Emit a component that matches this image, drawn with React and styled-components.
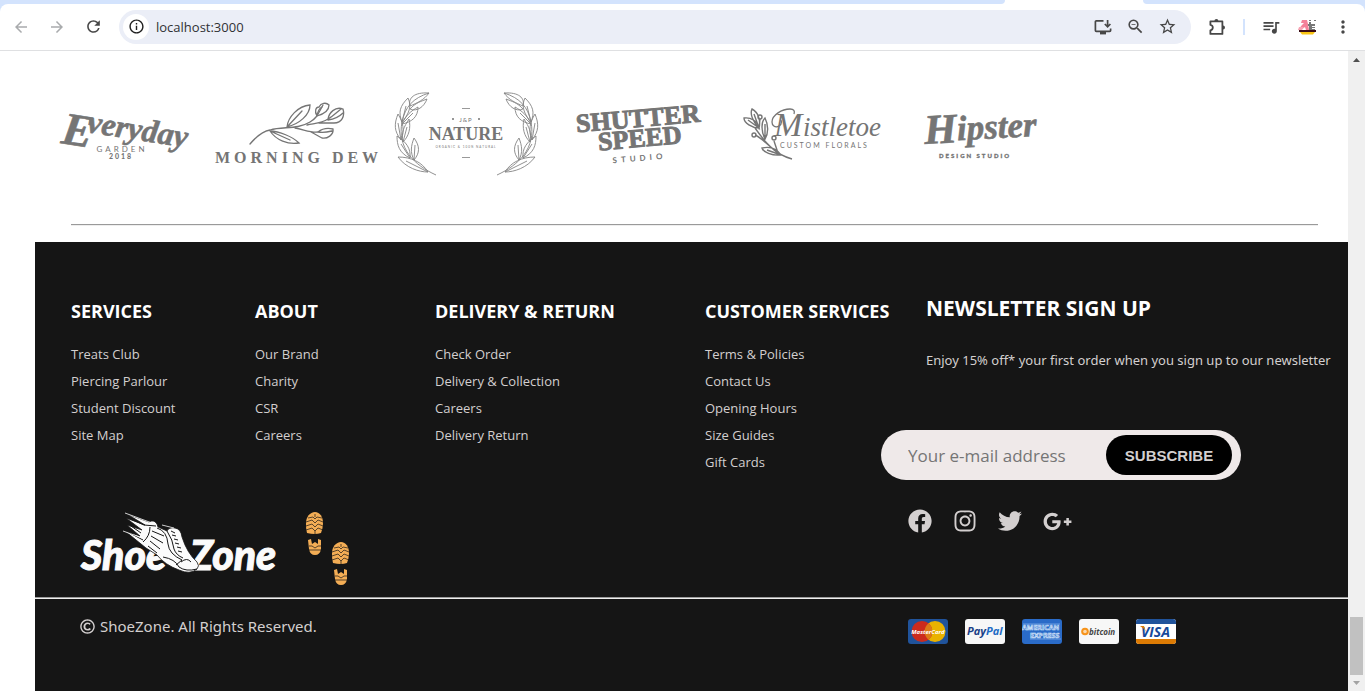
import React from 'react';
import styled, { createGlobalStyle } from 'styled-components';
import {
  MdArrowBack, MdArrowForward, MdRefresh, MdInfoOutline, MdZoomOut,
  MdStarBorder, MdQueueMusic, MdMoreVert,
} from 'react-icons/md';
import { FaFacebook, FaInstagram, FaTwitter, FaGooglePlusG, FaRegCopyright } from 'react-icons/fa';

const GlobalStyle = createGlobalStyle`
  * { box-sizing: border-box; }
  body { margin: 0; background: #fff; font-family: "Open Sans", "Noto Sans", sans-serif; }
  button, input { font: inherit; border: 0; margin: 0; padding: 0; background: none; }
  a { color: inherit; text-decoration: none; }
  svg { display: block; flex: none; }
`;

const Page = styled.div`
  height: 100vh;
  display: flex;
  flex-direction: column;
  overflow: hidden;
`;

/* ---------- browser chrome ---------- */

const TabStrip = styled.div`
  height: 4px;
  flex: none;
  display: flex;
  background: #fff;
`;
const TabsBefore = styled.div`
  flex: 1;
  border-bottom-right-radius: 4px;
  background: #d3e3fd;
`;
const ActiveTab = styled.div`
  width: 138px;
`;
const TabsAfter = styled.div`
  width: 222px;
  border-bottom-left-radius: 4px;
  background: #d3e3fd;
`;
const ToolbarBack = styled.div`
  flex: none;
  background: #d3e3fd;
`;
const Toolbar = styled.header`
  height: 47px;
  display: flex;
  align-items: center;
  padding: 0 10px 1px 10px;
  background: #fff;
  border-bottom: 1px solid #dfe0e2;
  border-radius: 8px 8px 0 0;
`;
const ToolButton = styled.button`
  width: ${(p) => p.$width || 36}px;
  height: 24px;
  display: flex;
  align-items: center;
  justify-content: center;
  flex: none;
  color: ${(p) => (p.$muted ? '#a9abad' : '#474747')};
`;
const NavButtons = styled.nav`
  display: flex;
  width: 110px;
  margin-left: -7px;
  margin-right: 6px;
`;
const AddressBar = styled.div`
  flex: 1;
  height: 34px;
  display: flex;
  align-items: center;
  padding: 0 8px 0 4px;
  border-radius: 17px;
  background: #ebeef7;
`;
const SiteInfo = styled.button`
  width: 26px;
  height: 26px;
  display: flex;
  align-items: center;
  justify-content: center;
  border-radius: 50%;
  background: #fff;
  color: #1f1f1f;
`;
const AddressInput = styled.input`
  flex: 1;
  min-width: 0;
  margin-left: 7px;
  font-size: 13px;
  color: #303134;
  outline: none;
`;
const Extensions = styled.div`
  display: flex;
  align-items: center;
  margin-left: 8px;
  margin-right: -6px;
`;
const ToolDivider = styled.span`
  width: 2px;
  height: 16px;
  margin: 0 8px;
  background: #d3e3fd;
`;

/* ---------- page viewport ---------- */

const Viewport = styled.div`
  flex: 1;
  min-height: 0;
  display: flex;
`;
const Content = styled.main`
  flex: 1;
  min-width: 0;
  padding-left: 35px;
  display: flex;
  flex-direction: column;
  overflow: hidden;
`;
const ScrollTrack = styled.aside`
  width: 17px;
  flex: none;
  display: flex;
  flex-direction: column;
  align-items: center;
  justify-content: space-between;
  padding: 7px 2px 6px;
  background: #f0f0f0;
`;
const ScrollEnd = styled.div`
  width: 13px;
  display: flex;
  flex-direction: column;
  align-items: center;
  gap: 6px;
`;
const ScrollThumb = styled.div`
  width: 13px;
  height: 58px;
  background: #c1c1c1;
`;

const Brands = styled.section`
  display: flex;
  padding: 29px 0 38px 5px;
`;
const Rule = styled.hr`
  width: auto;
  margin: 0 30px 16px 36px;
  border: 0;
  border-top: 1px solid #9a9a9a;
  border-bottom: 1px solid #eeeeee;
`;

/* ---------- footer ---------- */

const Footer = styled.footer`
  flex: 1;
  background: #151515;
  color: #d3cfcf;
`;
const FooterGrid = styled.div`
  display: grid;
  grid-template-columns: 184px 180px 270px 176px 1fr;
  grid-template-rows: auto auto;
  padding: 54px 0 9px 36px;
`;
const LinkColumn = styled.section`
  white-space: nowrap;
`;
const ColumnTitle = styled.h2`
  margin: 0;
  padding-top: 3px;
  font-size: 18px;
  line-height: 24px;
  font-weight: 700;
  color: #fff;
`;
const LinkList = styled.ul`
  list-style: none;
  margin: 18px 0 0;
  padding: 0;
  font-size: 13px;
  line-height: 27px;
`;
const Newsletter = styled.section`
  grid-row: 1 / span 2;
  grid-column: 5;
  white-space: nowrap;
`;
const NewsletterText = styled.div`
  padding-left: 45px;
`;
const NewsletterTitle = styled.h2`
  margin: 0;
  font-size: 21px;
  line-height: 24px;
  font-weight: 700;
  color: #fff;
`;
const NewsletterNote = styled.p`
  margin: 30px 0 0;
  font-family: "Noto Sans", "Open Sans", sans-serif;
  font-size: 13px;
  line-height: 20px;
`;
const SubscribeForm = styled.form`
  width: 360px;
  height: 50px;
  margin-top: 60px;
  display: flex;
  align-items: center;
  padding: 0 9px 0 27px;
  border-radius: 25px;
  background: #efe9e9;
`;
const EmailInput = styled.input`
  flex: 1;
  min-width: 0;
  font-size: 17px;
  outline: none;
  &::placeholder { color: #757575; opacity: 1; }
`;
const SubscribeButton = styled.button`
  width: 126px;
  height: 40px;
  border-radius: 20px;
  background: #000;
  color: #d3cfcf;
  font-family: "Liberation Sans", Arial, sans-serif;
  font-size: 15px;
  font-weight: 700;
`;
const SocialLinks = styled.div`
  display: flex;
  margin-top: 29px;
  padding-left: 27px;
  a { width: 45px; height: 24px; display: flex; align-items: center; }
`;
const LogoRow = styled.div`
  grid-column: 1 / span 4;
  display: flex;
  gap: 25px;
  padding: 32px 0 0 7px;
`;
const FooterRule = styled.hr`
  margin: 0;
  border: 0;
  border-top: 1px solid #9a9a9a;
  border-bottom: 1px solid #eeeeee;
`;
const Legal = styled.div`
  display: grid;
  grid-template-columns: 828px 1fr;
  padding: 16px 0 0 45px;
`;
const Copyright = styled.p`
  margin: 0;
  display: flex;
  align-items: center;
  gap: 5px;
  height: 22px;
  font-family: "Noto Sans", "Open Sans", sans-serif;
  font-size: 15px;
`;
const Cards = styled.div`
  display: flex;
  gap: 17px;
  padding-top: 4px;
`;

/* ---------- drawings ---------- */

const GREY = '#757575';
const SERIF = '"Liberation Serif", serif';
const SANS = 'Lato, sans-serif';

function InstallIcon() {
  return (
    <svg width="18" height="18" viewBox="0 0 18 18" fill="none" stroke="#474747" strokeWidth="1.7">
      <path d="M9.5 2.9H2.3a.9.9 0 0 0-.9.9v8.6c0 .5.4.9.9.9h13.4c.5 0 .9-.4.9-.9V10.5" />
      <path d="M13.6 2v6.4M10.8 6l2.8 2.8L16.4 6" />
      <path d="M6 15.2h6" strokeWidth="2.4" />
    </svg>
  );
}

function PuzzleIcon() {
  return (
    <svg width="18" height="18" viewBox="0 0 18 18">
      <path fill="none" stroke="#474747" strokeWidth="1.8" strokeLinejoin="round" d="M2.4 3.4H14.4V15.9H2.4V12.3C5.6 11.6 5.6 7.4 2.4 6.9Z" />
      <path fill="#474747" d="M6.4 3a2 2 0 0 1 4 0ZM15 7.4a2 2 0 0 1 0 4Z" />
    </svg>
  );
}

function ProfileIcon() {
  return (
    <svg width="18" height="16" viewBox="0 0 18 16">
      <path fill="#f48199" d="M4 1h5l1 4 1 6H8L7 8 3 11H0l4-5 2-2H3Z" />
      <path fill="#f7a5b4" d="M1 8h5l-2 3H0Z" />
      <path fill="#777" d="M11 3h2v2h4v2h-3v1h3v1h-3v1h3v1h-6V7h-1V5h1ZM11 1h2v1h-2ZM16 1h2v1h-2Z" />
      <path fill="#3a0b14" d="M1 11h17v2H1Z" />
      <path fill="#f9c513" d="M2 13h15l-2 2.6H4Z" />
    </svg>
  );
}

function EverydayLogo() {
  return (
    <svg width="171" height="106" viewBox="0 0 171 106" fill={GREY} role="img" aria-label="Everyday Garden">
      <g transform="rotate(9 85 50)" fontFamily={SERIF} fontStyle="italic" fontWeight="700" stroke={GREY} strokeWidth="0.6">
        <text x="23" y="73" fontSize="46">E</text>
        <text x="47" y="58" fontSize="32">veryday</text>
      </g>
      <g fontFamily={SANS} textAnchor="middle">
        <text x="82" y="72" fontSize="8" letterSpacing="3">GARDEN</text>
        <text x="81" y="79" fontSize="7" fontWeight="900" letterSpacing="2">2018</text>
      </g>
    </svg>
  );
}

function MorningDewLogo() {
  return (
    <svg width="171" height="106" viewBox="0 0 171 106" role="img" aria-label="Morning Dew">
      <g fill="none" stroke={GREY} strokeWidth="1.3" strokeLinecap="round">
        <path d="M39 64C45 57 52 51 59 50C72 46 86 50 99 42C106 38 107 34 112 25" />
        <path d="M76 47C77 37 87 26 99 25C99 35 88 44 76 47ZM76 47L91 31" />
        <path d="M106 36C103 31 105 27 108 27C110 23 115 22 118 25C118 31 113 34 106 36ZM106 36C107 30 109 28 111 27" />
        <path d="M96 45C106 43 111 43 117 39C118 33 124 26 132 29C134 36 131 43 123 43C118 43 113 43 108 43M117 40C124 39 129 36 132 33M117 39C122 36 126 32 130 29" />
        <path d="M84 48C94 50 101 53 107 52C112 48 118 48 122 49C123 55 116 59 111 58C107 56 104 54 100 52M107 52C112 53 117 52 121 51" />
        <path d="M59 51C68 51 82 57 88 63C77 65 65 60 59 51ZM59 51L79 60" />
      </g>
      <text x="4" y="83" fontFamily={SERIF} fontWeight="700" fontSize="16" letterSpacing="4" fill={GREY}>MORNING DEW</text>
    </svg>
  );
}

function Laurel() {
  return (
    <g fill="none" stroke="#858585" strokeWidth="0.9">
      <path d="M54 95C32 85 15 68 20 42C23 27 31 18 47 13" />
      <path d="M46 92C37 92 24 88 16 77C29 77 40 82 46 92ZM46 92L24 81M28 78C17 73 15 65 15 56C24 62 29 68 28 78ZM28 78L19 64M19 60C12 51 12 44 16 34C21 42 23 51 19 60ZM19 60L16 43M20 42C16 32 18 26 26 18C30 26 27 34 20 42ZM20 42L24 26M28 26C26 18 32 12 47 13C42 20 35 23 28 26M28 29C33 23 40 21 45 19C42 27 35 32 28 29ZM20 44C24 35 29 31 36 27C36 37 30 42 20 44ZM20 44L31 33M21 62C19 52 22 47 27 39C29 48 27 56 21 62ZM21 62L25 47M32 80C28 72 29 66 32 58C38 66 38 73 32 80ZM32 80L33 65" />
    </g>
  );
}

function NatureLogo() {
  return (
    <svg width="171" height="106" viewBox="0 0 171 106" fill={GREY} role="img" aria-label="J and P Nature">
      <Laurel />
      <g transform="matrix(-1 0 0 1 169 0)"><Laurel /></g>
      <path d="M80 28h8v1h-8ZM80 77h8v1h-8Z" fill="#999" />
      <circle cx="71" cy="39" r="1" /><circle cx="97" cy="39" r="1" />
      <g textAnchor="middle">
        <text x="84" y="42" fontFamily={SANS} fontSize="6" letterSpacing="1">J&amp;P</text>
        <text x="84" y="60" fontFamily={SERIF} fontWeight="700" fontSize="18">NATURE</text>
        <text x="84" y="68" fontFamily={SANS} fontSize="3" letterSpacing="1">ORGANIC &amp; 100% NATURAL</text>
      </g>
    </svg>
  );
}

function ShutterLogo() {
  return (
    <svg width="171" height="106" viewBox="0 0 171 106" fill={GREY} role="img" aria-label="Shutter Speed Studio">
      <g transform="rotate(-5 85 50)" textAnchor="middle" stroke={GREY}>
        <g fontFamily={SERIF} fontWeight="700" fontSize="26" strokeWidth="1">
          <text x="86" y="47">SHUTTER</text>
          <text x="86" y="67">SPEED</text>
        </g>
        <text x="84" y="81" fontFamily={SANS} fontWeight="700" fontSize="8" letterSpacing="4" strokeWidth="0">STUDIO</text>
      </g>
    </svg>
  );
}

function MistletoeLogo() {
  return (
    <svg width="171" height="106" viewBox="0 0 171 106" fill={GREY} role="img" aria-label="Mistletoe Custom Florals">
      <g fill="none" stroke={GREY} strokeWidth="1.4">
        <path d="M73 79C55 74 46 62 36 48M40 48C33 48 25 43 25 38C32 37 38 41 40 48L29 40M40 48C33 41 31 33 33 29C39 32 42 40 40 48L35 34M46 59C42 51 42 42 46 38C49 44 50 53 46 59ZM46 59V44M40 48L41 39M55 70C45 61 41 57 36 55M62 75C53 76 44 72 43 68C52 66 58 69 62 75ZM62 75L48 70M59 73L55 61" transform="translate(-5 0)" />
        <circle cx="36" cy="37" r="2" /><circle cx="30" cy="55" r="2" /><circle cx="50" cy="58" r="2" />
      </g>
      <g fontFamily={SERIF} fontStyle="italic">
        <text x="50" y="56" fontSize="34">M</text>
        <text x="79" y="56" fontSize="27">istletoe</text>
      </g>
      <path d="M57 40C60 47 48 50 48 42C48 35 58 29 66 29C70 29 71 31 70 34" fill="none" stroke={GREY} strokeWidth="1.3" />
      <text x="56" y="68" fontFamily={SANS} fontSize="7" letterSpacing="2">CUSTOM FLORALS</text>
    </svg>
  );
}

function HipsterLogo() {
  return (
    <svg width="171" height="106" viewBox="0 0 171 106" fill={GREY} role="img" aria-label="Hipster Design Studio">
      <g transform="rotate(-3 85 50)" fontFamily={SERIF} fontStyle="italic" fontWeight="700" stroke={GREY} strokeWidth="0.6">
        <text x="29" y="61" fontSize="42">H</text>
        <text x="62" y="59" fontSize="35">ipster</text>
      </g>
      <text x="44" y="78" fontFamily={SANS} fontWeight="900" fontSize="6" letterSpacing="2" stroke={GREY} strokeWidth="0.3">DESIGN STUDIO</text>
    </svg>
  );
}

function ShoeZoneLogo() {
  return (
    <svg width="202" height="80" viewBox="0 0 202 80" role="img" aria-label="ShoeZone">
      <g fontFamily="Lato, sans-serif" fontWeight="900" fontStyle="italic" fontSize="41" fill="#fbfbfb" stroke="#fbfbfb" strokeWidth="1">
        <text x="3" y="62">Shoe</text>
        <text x="112" y="62">Zone</text>
      </g>
      <path fill="#fbfbfb" stroke="#151515" strokeWidth="0.8" d="M49 6L71 14Q76 11 79 16L80 19L89 23Q91 19 97 20Q103 21 104 29Q109 45 119 54Q122 58 119 61Q112 67 101 62Q87 57 79 47L68 40L47 23L62 28L49 17L64 22L48 10L67 17Z" />
      <g fill="none" stroke="#151515" strokeWidth="1">
        <path d="M48 9L66 17L78 18M48 23L65 32M53 18L63 25M72 19Q72 28 65 34M79 20Q89 23 90 36Q91 46 104 52L98 57M89 23Q95 32 96 41Q98 47 105 50M74 23L86 28M73 28L85 35M72 33L82 41M70 38L79 45M85 49Q97 51 101 59Q108 64 119 61M103 54Q109 49 113 54" />
        <path d="M93 23l4 2M94 27l4 1M96 31l4 1M97 35l4 1M99 39l4 1M100 43l4 1" />
      </g>
      <path d="M47 5L74 15M45 23L64 30M84 17L96 20" stroke="#fbfbfb" strokeWidth="0.8" />
    </svg>
  );
}

function Sole({ x, y }) {
  return (
    <g transform={`translate(${x} ${y})`}>
      <path fill="#f3ad55" d="M9 0C14 0 17 5 17 11C17 15 16 18 15 21Q9 23 1 21C0 17 0 14 0 11C0 5 4 0 9 0Z" />
      <path fill="#f3ad55" d="M2 28L5 27L6 32L9 30L12 32L12 27L15 28L15 37Q14 43 9 43Q4 43 3 37Z" />
      <g fill="none" stroke="#151515" strokeWidth="0.7">
        <path d="M2 6L7 5L9 7L11 5L16 6M0 10L6 8L9 11L12 8L17 10M0 14L6 12L9 15L12 12L17 14M0 18L6 16L9 19L12 16L17 18M9 2V5M9 19V22" />
        <path d="M3 34L6 34L9 36L12 34L15 34M3 38H15" />
      </g>
    </g>
  );
}

function Footprints() {
  return (
    <svg width="46" height="80" viewBox="0 0 46 80" aria-hidden="true">
      <Sole x={1} y={4} />
      <Sole x={27} y={34} />
    </svg>
  );
}

function CardFrame({ label, fill, children }) {
  return (
    <svg width="40" height="25" viewBox="0 0 40 25" role="img" aria-label={label} fontFamily='"Open Sans", sans-serif' fontWeight="700">
      <rect width="40" height="25" rx="3" fill={fill} />
      {children}
    </svg>
  );
}

function PaymentCards() {
  return (
    <Cards>
      <CardFrame label="MasterCard" fill="#20539b">
        <circle cx="27" cy="12.500" r="10.500" fill="#e9b200" />
        <circle cx="14" cy="12.500" r="10.500" fill="#cc2b1d" />
        <path d="M20.500 4.300a10.500 10.500 0 0 1 0 16.400a10.500 10.500 0 0 1 0-16.400Z" fill="#dc7a16" />
        <text x="20" y="15" textAnchor="middle" fontSize="6" fontStyle="italic" fill="#fff">MasterCard</text>
      </CardFrame>
      <CardFrame label="PayPal" fill="#f7f7f7">
        <text x="2" y="16" fontSize="11" fontStyle="italic" fill="#1b3f86">Pay<tspan fill="#1e6cc5">Pal</tspan></text>
      </CardFrame>
      <CardFrame label="American Express" fill="#2a6bc8">
        <g fontSize="7" fill="#2a6bc8" stroke="#d9e8fb" strokeWidth="0.6">
          <text x="0" y="11">AMERICAN</text>
          <text x="8" y="19">EXPRESS</text>
        </g>
        <path d="M1 5h37M8 20h31" stroke="#8bb4ec" strokeWidth="0.7" />
      </CardFrame>
      <CardFrame label="bitcoin" fill="#f7f7f7">
        <circle cx="6" cy="12.500" r="3.800" fill="#f7931a" />
        <circle cx="6" cy="12.500" r="1.800" fill="#fbd9ae" />
        <text x="10" y="16" fontSize="8" fontStyle="italic" fill="#444">bitcoin</text>
      </CardFrame>
      <CardFrame label="Visa" fill="#fff">
        <path d="M0 5V3Q0 0 3 0H37Q40 0 40 3V5Z" fill="#20539b" />
        <path d="M0 20V22Q0 25 3 25H37Q40 25 40 22V20Z" fill="#dd7b04" />
        <text x="5" y="18" fontSize="14" fontStyle="italic" fill="#17499a">VISA</text>
        <path d="M4 7H8L10 13Q8 9 4 7Z" fill="#dd7b04" />
      </CardFrame>
    </Cards>
  );
}

/* ---------- page ---------- */

const COLUMNS = [
  { title: 'SERVICES', links: ['Treats Club', 'Piercing Parlour', 'Student Discount', 'Site Map'] },
  { title: 'ABOUT', links: ['Our Brand', 'Charity', 'CSR', 'Careers'] },
  { title: 'DELIVERY & RETURN', links: ['Check Order', 'Delivery & Collection', 'Careers', 'Delivery Return'] },
  { title: 'CUSTOMER SERVICES', links: ['Terms & Policies', 'Contact Us', 'Opening Hours', 'Size Guides', 'Gift Cards'] },
];

export default function App() {
  return (
    <Page>
      <GlobalStyle />
      <TabStrip>
        <TabsBefore />
        <ActiveTab />
        <TabsAfter />
      </TabStrip>
      <ToolbarBack>
        <Toolbar>
          <NavButtons>
            <ToolButton $muted aria-label="Back"><MdArrowBack size={18} /></ToolButton>
            <ToolButton $muted aria-label="Forward"><MdArrowForward size={18} /></ToolButton>
            <ToolButton aria-label="Reload"><MdRefresh size={19} /></ToolButton>
          </NavButtons>
          <AddressBar>
            <SiteInfo aria-label="View site information"><MdInfoOutline size={17} /></SiteInfo>
            <AddressInput aria-label="Address" defaultValue="localhost:3000" />
            <ToolButton $width={32} aria-label="Install app"><InstallIcon /></ToolButton>
            <ToolButton $width={32} aria-label="Zoom"><MdZoomOut size={19} /></ToolButton>
            <ToolButton $width={32} aria-label="Bookmark"><MdStarBorder size={19} /></ToolButton>
          </AddressBar>
          <Extensions>
            <ToolButton aria-label="Extensions"><PuzzleIcon /></ToolButton>
            <ToolDivider />
            <ToolButton aria-label="Media controls"><MdQueueMusic size={20} /></ToolButton>
            <ToolButton aria-label="Profile"><ProfileIcon /></ToolButton>
            <ToolButton aria-label="Menu"><MdMoreVert size={20} /></ToolButton>
          </Extensions>
        </Toolbar>
      </ToolbarBack>

      <Viewport>
        <Content>
          <Brands>
            <EverydayLogo />
            <MorningDewLogo />
            <NatureLogo />
            <ShutterLogo />
            <MistletoeLogo />
            <HipsterLogo />
          </Brands>
          <Rule />
          <Footer>
            <FooterGrid>
              {COLUMNS.map((column) => (
                <LinkColumn key={column.title}>
                  <ColumnTitle>{column.title}</ColumnTitle>
                  <LinkList>
                    {column.links.map((link) => (
                      <li key={link}><a href="#">{link}</a></li>
                    ))}
                  </LinkList>
                </LinkColumn>
              ))}
              <Newsletter>
                <NewsletterText>
                  <NewsletterTitle>NEWSLETTER SIGN UP</NewsletterTitle>
                  <NewsletterNote>Enjoy 15% off* your first order when you sign up to our newsletter</NewsletterNote>
                </NewsletterText>
                <SubscribeForm onSubmit={(e) => e.preventDefault()}>
                  <EmailInput type="email" aria-label="Your e-mail address" placeholder="Your e-mail address" />
                  <SubscribeButton type="submit">SUBSCRIBE</SubscribeButton>
                </SubscribeForm>
                <SocialLinks>
                  <a href="#" aria-label="Facebook"><FaFacebook size={24} /></a>
                  <a href="#" aria-label="Instagram"><FaInstagram size={24} /></a>
                  <a href="#" aria-label="Twitter"><FaTwitter size={24} /></a>
                  <a href="#" aria-label="Google Plus"><FaGooglePlusG size={29} /></a>
                </SocialLinks>
              </Newsletter>
              <LogoRow>
                <ShoeZoneLogo />
                <Footprints />
              </LogoRow>
            </FooterGrid>
            <FooterRule />
            <Legal>
              <Copyright><FaRegCopyright size={15} />ShoeZone. All Rights Reserved.</Copyright>
              <PaymentCards />
            </Legal>
          </Footer>
        </Content>
        <ScrollTrack>
          <svg width="7" height="4" viewBox="0 0 7 4"><path d="M0 4L3.500 0L7 4Z" fill="#505050" /></svg>
          <ScrollEnd>
            <ScrollThumb />
            <svg width="7" height="4" viewBox="0 0 7 4"><path d="M0 0L3.500 4L7 0Z" fill="#a3a3a3" /></svg>
          </ScrollEnd>
        </ScrollTrack>
      </Viewport>
    </Page>
  );
}
